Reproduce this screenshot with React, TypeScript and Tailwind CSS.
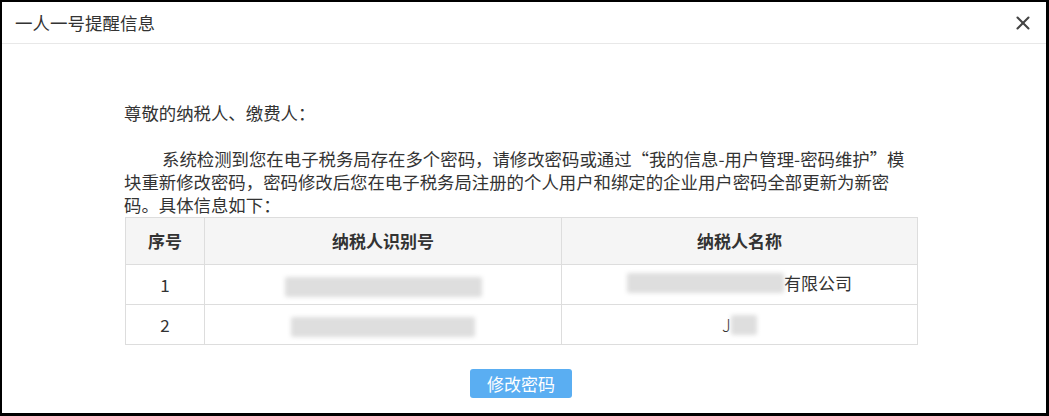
import { X } from "lucide-react";

const font = { fontFamily: '"Noto Sans CJK SC", "Noto Sans", sans-serif' };

function Blur({ w }: { w: number }) {
  return <span className="inline-block h-[20px] rounded-[2px] bg-[#dedede] blur-[2px] align-middle" style={{ width: w }} />;
}

const rows = [
  { no: "1", id: <Blur w={197} />, name: (<span className="inline-flex items-center"><Blur w={157} /><span>有限公司</span></span>) },
  { no: "2", id: <Blur w={184} />, name: (<span className="inline-flex items-center"><span className="font-light">J</span><Blur w={26} /></span>) }
];

export default function App() {
  return (
    <div className="box-border h-[416px] w-[1049px] border-b-[3px] border-l-2 border-r-[3px] border-t-2 border-black bg-white text-[#333]" style={font}>
      <div className="flex h-[42px] items-center justify-between border-b border-[#e8e8e8] pl-[13px] pr-[12px]">
        <span className="text-[17.5px] leading-none">一人一号提醒信息</span>
        <X className="h-[22px] w-[22px] text-[#444]" strokeWidth={2.3} />
      </div>

      <div className="pl-[122px] pt-[57px]">
        <div className="w-[795px] text-[17.4px] leading-[23px]">
          <p>尊敬的纳税人、缴费人：</p>
          <p className="h-[23px]" />
          <p className="indent-[38px]">
            系统检测到您在电子税务局存在多个密码，请修改密码或通过“我的信息-用户管理-密码维护”模块重新修改密码，密码修改后您在电子税务局注册的个人用户和绑定的企业用户密码全部更新为新密码。具体信息如下：
          </p>
        </div>

        <table className="ml-[1px] mt-[1px] w-[793px] border-collapse text-[17px]">
          <thead>
            <tr className="h-[47px] bg-[#f5f5f5]">
              <th className="w-[79px] border border-[#ddd] font-bold">序号</th>
              <th className="w-[357px] border border-[#ddd] font-bold">纳税人识别号</th>
              <th className="border border-[#ddd] font-bold">纳税人名称</th>
            </tr>
          </thead>
          <tbody>
            {rows.map((r) => (
              <tr key={r.no} className="h-[40px]">
                <td className="border border-[#ddd] text-center">{r.no}</td>
                <td className="border border-[#ddd] text-center">{r.id}</td>
                <td className="border border-[#ddd] text-center">{r.name}</td>
              </tr>
            ))}
          </tbody>
        </table>

        <div className="ml-[346px] mt-[24px]">
          <button type="button" className="h-[29px] w-[102px] rounded-[3px] bg-[#5aaef2] text-[17px] leading-none text-white">
            修改密码
          </button>
        </div>
      </div>
    </div>
  );
}
